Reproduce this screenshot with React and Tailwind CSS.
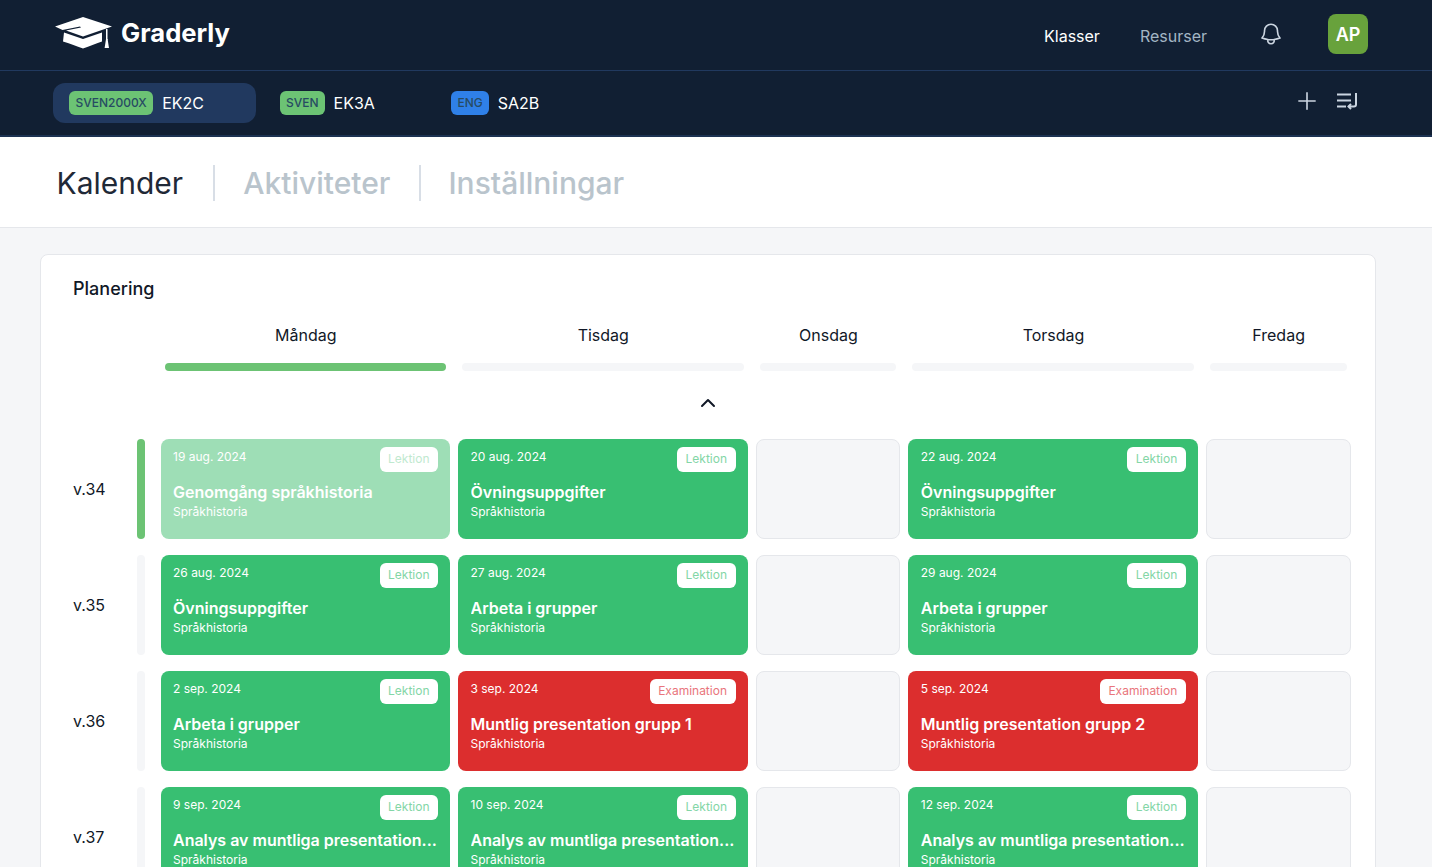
import React from 'react';
import { ChevronUp } from 'lucide-react';
import { HiOutlineBell, HiOutlinePlus } from 'react-icons/hi2';

const font = { fontFamily: 'Inter, sans-serif' };
const analysis = 'Analys av muntliga presentation...';

const weeks = [
  {
    label: 'v.34',
    active: true,
    days: [
      { date: '19 aug. 2024', title: 'Genomgång språkhistoria', past: true },
      { date: '20 aug. 2024', title: 'Övningsuppgifter' },
      null,
      { date: '22 aug. 2024', title: 'Övningsuppgifter' },
      null,
    ],
  },
  {
    label: 'v.35',
    days: [
      { date: '26 aug. 2024', title: 'Övningsuppgifter' },
      { date: '27 aug. 2024', title: 'Arbeta i grupper' },
      null,
      { date: '29 aug. 2024', title: 'Arbeta i grupper' },
      null,
    ],
  },
  {
    label: 'v.36',
    days: [
      { date: '2 sep. 2024', title: 'Arbeta i grupper' },
      { date: '3 sep. 2024', title: 'Muntlig presentation grupp 1', exam: true },
      null,
      { date: '5 sep. 2024', title: 'Muntlig presentation grupp 2', exam: true },
      null,
    ],
  },
  {
    label: 'v.37',
    days: [
      { date: '9 sep. 2024', title: analysis },
      { date: '10 sep. 2024', title: analysis },
      null,
      { date: '12 sep. 2024', title: analysis },
      null,
    ],
  },
];

const dayNames = ['Måndag', 'Tisdag', 'Onsdag', 'Torsdag', 'Fredag'];

const Logo = () => (
  <svg viewBox="0 0 58 32" className="w-[58px] h-[32px]" fill="white">
    <path d="M28 0 L57 9.5 L28 19.5 L11 13.5 L26 10.5 L25 9.5 L7.5 13 L0 9.5 Z" />
    <path d="M9 15.5 L28 22 L47 15.5 L47 24.5 C40 27 35 29 28 31.5 C21 29 16 27 8 24.5 Z" />
    <rect x="51" y="12" width="1.5" height="11" />
    <path d="M51 22 L52.6 22 L54 31 L49.6 31 Z" />
  </svg>
);

const WrapIcon = () => (
  <svg viewBox="0 0 22 18" className="w-[22px] h-[18px]" fill="none" stroke="#cbd5e1" strokeWidth="2">
    <path d="M1 2.5 H15 M1 8.5 H15 M1 14.5 H10" />
    <path d="M20 1 V12.5 Q20 14.5 18 14.5 H12.5" />
    <path d="M15 12 L12.5 14.5 L15 17" />
  </svg>
);

const Tab = ({ code, name, color, active, width, pad, gap }) => (
  <div className={`flex items-center h-10 rounded-xl pl-4 ${width} ${active ? 'bg-[#21395f]' : ''}`}>
    <span className={`h-6 flex items-center rounded-md text-xs font-medium text-[#274b63] ${pad} ${color}`}>{code}</span>
    <span className={`text-white text-base ${gap}`}>{name}</span>
  </div>
);

const Card = ({ item }) => {
  if (!item) return <div className="h-[100px] rounded-lg bg-[#f5f6f8] border border-[#e5e7eb]"></div>;
  const bg = item.exam ? 'bg-[#dc2e2e]' : item.past ? 'bg-[#9edeb6]' : 'bg-[#38bf72]';
  const badge = item.exam ? 'text-[#e9757c]' : item.past ? 'text-[#bfe9cf]' : 'text-[#83d6a6]';
  return (
    <div className={`h-[100px] rounded-lg pl-[12.5px] pr-3 pt-2 text-white min-w-0 ${bg}`}>
      <div className="flex justify-between items-start">
        <span className="text-xs leading-4 mt-0.5">{item.date}</span>
        <span className={`h-[25px] px-[8.5px] pb-0.5 flex items-center rounded-md bg-white text-xs ${badge}`}>{item.exam ? 'Examination' : 'Lektion'}</span>
      </div>
      <div className="mt-[8px] text-base leading-6 font-semibold whitespace-nowrap overflow-hidden">{item.title}</div>
      <div className="text-xs leading-4">Språkhistoria</div>
    </div>
  );
};

export default function App() {
  return (
    <div className="h-screen overflow-hidden bg-[#f5f6f8]" style={font}>
      <header className="bg-[#111f33]">
        <div className="h-[71px] border-b border-[#21395f] flex items-center pl-[55px] pr-16">
          <div className="flex items-center -mt-1">
            <Logo />
            <span className="ml-2 text-[25.6px] font-bold text-white">Graderly</span>
          </div>
          <nav className="ml-auto flex items-center text-base mt-0.5">
            <span className="text-white">Klasser</span>
            <span className="ml-10 text-[#a3b5c4]">Resurser</span>
            <HiOutlineBell className="ml-[51px] w-[26px] h-[26px] text-[#cbd5e1] -mt-1" />
            <div className="ml-[44px] w-10 h-10 pt-0.5 rounded-lg bg-[#68a23c] text-white font-semibold text-lg flex items-center justify-center -mt-1">AP</div>
          </nav>
        </div>
        <div className="h-[66px] border-b-2 border-[#1c3252] flex items-center pl-[53px] pr-[74px]">
          <Tab code="SVEN2000X" name="EK2C" color="bg-[#6cc374]" active width="w-[203px]" pad="px-[6.5px]" gap="ml-[9px]" />
          <div className="w-2"></div>
          <Tab code="SVEN" name="EK3A" color="bg-[#6cc374]" width="w-[171px]" pad="px-1.5" gap="ml-[9px]" />
          <Tab code="ENG" name="SA2B" color="bg-[#2f80e8]" width="w-[150px]" pad="px-[6.5px]" gap="ml-[8.5px]" />
          <div className="ml-auto flex items-center gap-4 -mt-1">
            <HiOutlinePlus className="w-[26px] h-[26px] text-[#cbd5e1]" />
            <WrapIcon />
          </div>
        </div>
      </header>

      <div className="h-[91px] bg-white border-b border-[#e5e7eb] flex items-center pl-[56.5px] pt-0.5 text-3xl font-medium">
        <span className="font-normal text-[#1f2937]">Kalender</span>
        <span className="ml-[29.5px] mr-[28.5px] w-0.5 h-9 bg-[#d8dee6]"></span>
        <span className="text-[#b9c4cc]">Aktiviteter</span>
        <span className="ml-[28.5px] mr-[27.5px] w-0.5 h-9 bg-[#d8dee6]"></span>
        <span className="text-[#b9c4cc]">Inställningar</span>
      </div>

      <main className="pt-[26px] pl-10 pr-14">
        <section className="bg-white border border-[#e5e7eb] rounded-lg pt-5 pl-[31.5px] pr-[24.5px]">
          <h2 className="pl-[0.5px] text-lg font-medium leading-7 text-[#111827]">Planering</h2>
          <div className="mt-5 pl-[88px]">
            <div className="grid grid-cols-[2fr_2fr_1fr_2fr_1fr] gap-2">
              {dayNames.map((day, i) => (
                <div key={day} className="text-center">
                  <div className="pl-px text-base leading-6 text-[#111827]">{day}</div>
                  <div className={`mt-4 mx-1 h-2 rounded-full ${i === 0 ? 'bg-[#6cc374]' : 'bg-[#f5f6f8]'}`}></div>
                </div>
              ))}
            </div>
          </div>
          <div className="mt-[20px] pr-2 flex justify-center">
            <ChevronUp className="w-6 h-6 text-[#111827]" />
          </div>
          <div className="mt-[24px] flex flex-col gap-4">
            {weeks.map((week) => (
              <div key={week.label} className="flex items-stretch">
                <div className="w-16 pl-[0.5px] self-center text-base text-[#111827]">{week.label}</div>
                <div className={`w-2 rounded-full ${week.active ? 'bg-[#6cc374]' : 'bg-[#f5f6f8]'}`}></div>
                <div className="ml-4 flex-1 min-w-0 grid grid-cols-[2fr_2fr_1fr_2fr_1fr] gap-2">
                  {week.days.map((item, i) => <Card key={i} item={item} />)}
                </div>
              </div>
            ))}
          </div>
        </section>
      </main>
    </div>
  );
}
